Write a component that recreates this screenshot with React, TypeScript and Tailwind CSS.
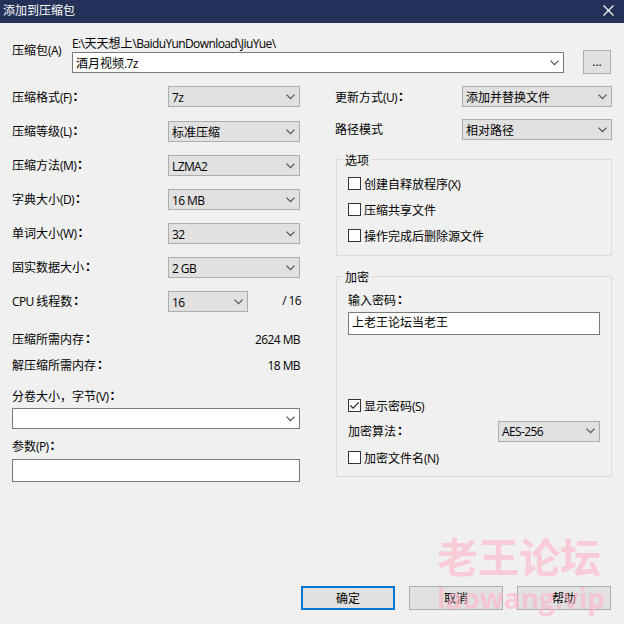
import { useState } from 'react';
import type { ReactNode } from 'react';
import clsx from 'clsx';

const COMPRESSION_ROWS = [
  { label: '压缩格式(F)：', value: '7z' },
  { label: '压缩等级(L)：', value: '标准压缩' },
  { label: '压缩方法(M)：', value: 'LZMA2' },
  { label: '字典大小(D)：', value: '16 MB' },
  { label: '单词大小(W)：', value: '32' },
  { label: '固实数据大小：', value: '2 GB' },
];

const OPTIONS = ['创建自释放程序(X)', '压缩共享文件', '操作完成后删除源文件'];

// Latin runs are set a little tighter than the Chinese text around them
function Label({ text, className }: { text: string; className?: string }) {
  const parts = text.split(/([\x20-\x7e]+|：)/).filter(Boolean);
  return (
    <span className={clsx('block whitespace-pre leading-5', className)}>
      {parts.map((part, i) => {
        if (part === '：') return <span key={i} className="relative -top-px left-px font-bold">{part}</span>;
        return /^[\x20-\x7e]/.test(part) ? (
          <span key={i} className="tracking-[-0.6px]">{part}</span>
        ) : (
          <span key={i}>{part}</span>
        );
      })}
    </span>
  );
}

function Chevron() {
  return (
    <svg width="9" height="6" viewBox="0 0 9 6" className="shrink-0">
      <path d="M0.5 0.7L4.5 4.7L8.5 0.7" fill="none" stroke="#505050" strokeWidth="1.2" />
    </svg>
  );
}

function Combo({ value, className, editable }: { value: string; className: string; editable?: boolean }) {
  return (
    <div
      className={clsx(
        'flex h-[21px] shrink-0 items-center justify-between border pl-[3px] pr-1',
        editable ? 'border-[#7a7a7a] bg-white' : 'border-[#adadad] bg-[#e1e1e1]',
        className
      )}
    >
      <Label text={value} className="pt-[2px]" />
      <Chevron />
    </div>
  );
}

function CheckRow({ label, initial = false }: { label: string; initial?: boolean }) {
  const [checked, setChecked] = useState(initial);
  return (
    <div className="flex h-[26px] cursor-default items-center" onClick={() => setChecked(!checked)}>
      <span className="mr-[3px] flex size-[13px] shrink-0 items-center justify-center border border-[#333] bg-white">
        {checked && (
          <svg width="11" height="11" viewBox="0 0 11 11">
            <path d="M1.3 5.4L4.1 8.2L9.8 2.4" fill="none" stroke="#222" strokeWidth="1.2" />
          </svg>
        )}
      </span>
      <Label text={label} className="pt-1" />
    </div>
  );
}

function Group({ title, className, children }: { title: string; className: string; children: ReactNode }) {
  return (
    <section className={clsx('border border-[#dcdcdc] pl-[11px] pr-[11px]', className)}>
      <div className="-ml-[5px] -mt-[10px] w-fit bg-[#f0f0f0] px-[2px]">
        <Label text={title} className="-mb-px pt-px" />
      </div>
      {children}
    </section>
  );
}

function Button({ children, primary }: { children: ReactNode; primary?: boolean }) {
  return (
    <button
      className={clsx(
        'flex h-6 w-[94px] items-center justify-center bg-[#e1e1e1] pt-px',
        primary ? 'border-2 border-[#0078d7]' : 'border border-[#adadad]'
      )}
    >
      {children}
    </button>
  );
}

export default function App() {
  return (
    <div className="relative flex h-[624px] w-[624px] flex-col overflow-hidden bg-[#f0f0f0] font-['Open_Sans','Noto_Sans_CJK_SC',sans-serif] text-[12px] text-black">
      {/* Title bar */}
      <header className="flex h-[23px] shrink-0 items-center justify-between bg-[#243158] pl-[3px] pr-[10px] text-white">
        <Label text="添加到压缩包" className="-mt-[2px]" />
        <svg width="11" height="11" viewBox="0 0 11 11" className="-mt-[3px]">
          <path d="M0.5 0.5L10.5 10.5M10.5 0.5L0.5 10.5" stroke="#fff" strokeWidth="1.2" />
        </svg>
      </header>

      {/* Archive path */}
      <div className="flex h-14 shrink-0 pl-3">
        <Label text="压缩包(A)" className="w-[60px] pt-[18px]" />
        <div className="w-[492px] pt-[11px]">
          <Label text={'E:\\天天想上\\BaiduYunDownload\\JiuYue\\'} className="-mb-[2px]" />
          <Combo value="酒月视频.7z" className="w-full" editable />
        </div>
        <button className="ml-[19px] mt-[27px] flex h-6 w-7 items-center justify-center border border-[#adadad] bg-[#e1e1e1]">
          ...
        </button>
      </div>

      <div className="flex shrink-0 gap-9 pl-3">
        {/* Compression settings */}
        <div className="w-72">
          {COMPRESSION_ROWS.map((row, i) => (
            <div key={row.label} className={clsx('flex justify-between pt-[7px]', i === 0 ? 'h-[35px]' : 'h-[34px]')}>
              <Label text={row.label} className={i === 0 ? 'pt-[2px]' : 'pt-px'} />
              <Combo value={row.value} className="w-[132px]" />
            </div>
          ))}
          <div className="flex h-[46px] pt-[7px]">
            <Label text="CPU 线程数：" className="w-[156px] pt-px" />
            <Combo value="16" className="w-20" />
            <Label text="/ 16" className="-mr-px ml-auto" />
          </div>
          <div className="flex h-[26px] justify-between">
            <Label text="压缩所需内存：" />
            <Label text="2624 MB" />
          </div>
          <div className="flex h-[31px] justify-between">
            <Label text="解压缩所需内存：" />
            <Label text="18 MB" />
          </div>
          <Label text="分卷大小，字节(V)：" className="mb-px" />
          <Combo value="" className="w-full" editable />
          <Label text="参数(P)：" className="mb-[2px] mt-2" />
          <div className="h-[23px] border border-[#7a7a7a] bg-white" />
        </div>

        {/* Update mode, options and encryption */}
        <div className="w-[276px]">
          <div className="flex h-[33px] justify-between pt-[7px]">
            <Label text="更新方式(U)：" className="-ml-px pt-[2px]" />
            <Combo value="添加并替换文件" className="w-[150px]" />
          </div>
          <div className="flex h-[47px] justify-between pt-[7px]">
            <Label text="路径模式" className="-ml-px pt-px" />
            <Combo value="相对路径" className="w-[150px]" />
          </div>

          <Group title="选项" className="h-[97px]">
            {OPTIONS.map((label) => (
              <CheckRow key={label} label={label} />
            ))}
          </Group>

          <Group title="加密" className="mt-5 h-[201px]">
            <Label text="输入密码：" className="mt-1" />
            <div className="mt-px flex h-[23px] items-center border border-[#7a7a7a] bg-white pl-[3px]">
              <Label text="上老王论坛当老王" className="-mt-px" />
            </div>
            <div className="mt-[57px]">
              <CheckRow label="显示密码(S)" initial />
              <div className="flex h-[26px] items-center justify-between">
                <Label text="加密算法：" className="pt-px" />
                <Combo value="AES-256" className="w-[102px]" />
              </div>
              <CheckRow label="加密文件名(N)" />
            </div>
          </Group>
        </div>
      </div>

      <footer className="mb-[14px] ml-[301px] mt-auto flex gap-[14px]">
        <Button primary>确定</Button>
        <Button>取消</Button>
        <Button>帮助</Button>
      </footer>

      {/* Watermark */}
      <div className="pointer-events-none absolute left-[437px] top-[533px] whitespace-nowrap font-bold text-[#ffb3c6]/60">
        <div className="font-['Noto_Sans_CJK_SC',sans-serif] text-[41px] leading-[44px]">老王论坛</div>
        <div className="mt-[3px] font-['Open_Sans',sans-serif] text-[28px] leading-[36px]">laowang.vip</div>
      </div>
    </div>
  );
}
